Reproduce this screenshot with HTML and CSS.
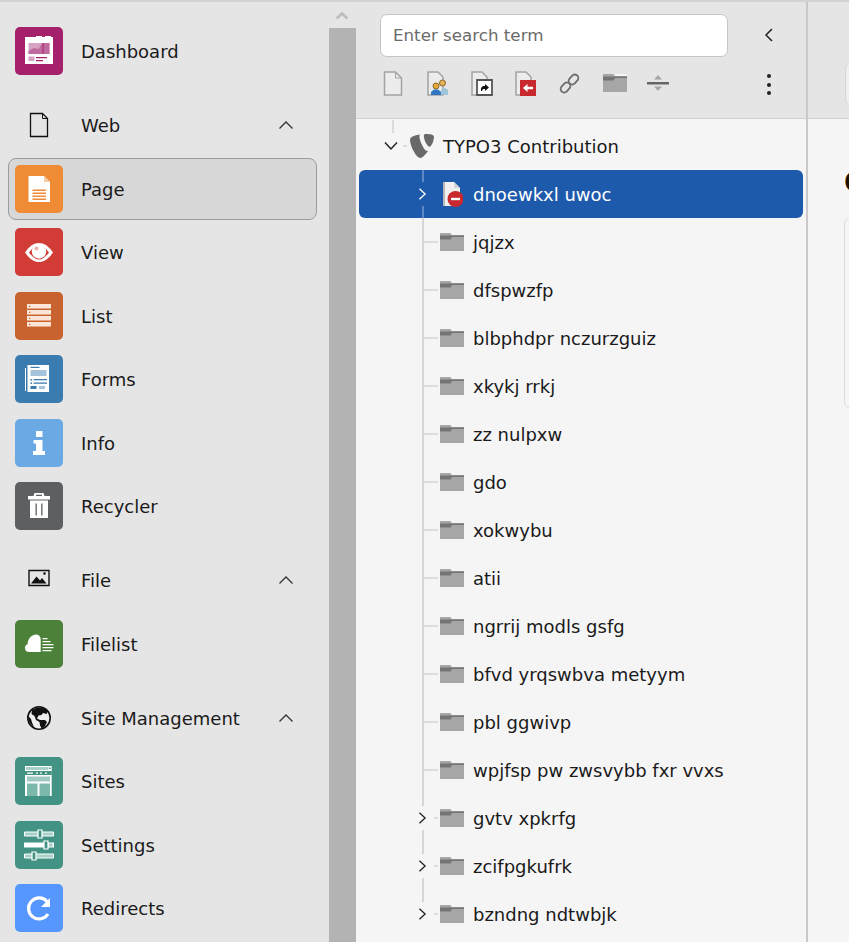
FILE: index.html
```html
<!DOCTYPE html>
<html lang="en">
<head>
  <meta charset="UTF-8">
  <title>TYPO3 Contribution - Page</title>
  <link rel="stylesheet" href="styles.css">
</head>
<body>
  <svg class="defs" width="0" height="0">
    <symbol id="folder" viewBox="0 0 24 18">
      <path fill="#a6a6a6" d="M0 2h24v16H0z"/>
      <path fill="#f5f5f5" d="M12 0h12v2H12z"/>
      <path fill="#a6a6a6" d="M0 0h10l2 2H0z"/>
      <path fill="#757575" d="M0 2.500h24V4H12l-1.500 2.500H0z"/>
    </symbol>
    <symbol id="chev-up" viewBox="0 0 16 10">
      <path fill="none" stroke="#333" stroke-width="1.300" d="M1.500 8.500 8 2l6.500 6.500"/>
    </symbol>
    <symbol id="chev-right" viewBox="0 0 10 16">
      <path fill="none" stroke="currentColor" stroke-width="1.500" d="M1.500 2 8 8l-6.500 6"/>
    </symbol>
  </svg>

  <div class="topline"></div>
  <div class="app">

    <nav class="modules">
      <div class="module-list">
        <a class="item first">
          <span class="tile dashboard">
            <svg viewBox="0 0 48 48"><path fill="#fff" d="M10 10h11V9h6v1h3V9h6v1h2v27H10z"/><path fill="#d7a3c3" d="M13.500 16h21v11h-21z"/><path fill="#c06b9f" d="M13.500 24l5-3 5 1 4-6h7v11h-21z"/><path fill="#a5216c" d="M27.500 16h1v11h-1z"/><path fill="#d7a3c3" d="M13.500 29.500h6V34h-6z"/><path fill="#a5216c" d="M21 30h11v1.200H21zM21 33h7v1.200h-7z"/></svg>
          </span>
          <span class="label">Dashboard</span>
        </a>

        <div class="group">
          <div class="item head">
            <span class="tile plain">
              <svg viewBox="0 0 48 48"><path fill="none" stroke="#111" stroke-width="1.300" d="M15.500 12.500h12l5 5v18h-17z"/><path fill="none" stroke="#111" d="M27.500 12.500v5h5"/></svg>
            </span>
            <span class="label">Web</span>
            <svg class="caret"><use href="#chev-up"/></svg>
          </div>
          <a class="item active">
            <span class="tile page">
              <svg viewBox="0 0 48 48"><path fill="#fff" d="M13.500 11H29l6 6v20H13.500z"/><path fill="#f7c9a4" d="M29 11l6 6h-6z"/><path fill="#ef8a35" d="M17.500 24.500H31V26H17.500zM17.500 27.500H31V29H17.500zM17.500 30.500H31V32H17.500zM17.500 33.500H31V35H17.500z"/></svg>
            </span>
            <span class="label">Page</span>
          </a>
          <a class="item">
            <span class="tile view">
              <svg viewBox="0 0 48 48"><path fill="#fff" d="M10 24.500C14.500 18 19 15 24 15s9.500 3 14 9.500C33.500 31 29 34 24 34s-9.500-3-14-9.500z"/><path fill="#d13c37" d="M14 24.500C17.500 20 20.500 18 24 18s6.500 2 10 6.500C30.500 29 27.500 31.500 24 31.500S17.500 29 14 24.500z"/><circle cx="24" cy="23.500" r="7.200" fill="#fff"/><circle cx="21.500" cy="20.500" r="2" fill="#d13c37" opacity=".4"/></svg>
            </span>
            <span class="label">View</span>
          </a>
          <a class="item">
            <span class="tile list">
              <svg viewBox="0 0 48 48"><path fill="#fbe5d6" d="M12 12h24v4.500H12zM12 18h24v4.500H12zM12 24h24v4.500H12zM12 30h24v4.500H12z"/><path fill="#c8632f" d="M14 13.800h1.200V15H14zM14 19.800h1.200V21H14zM14 25.800h1.200V27H14zM14 31.800h1.200V33H14z"/></svg>
            </span>
            <span class="label">List</span>
          </a>
          <a class="item">
            <span class="tile forms">
              <svg viewBox="0 0 48 48"><path fill="#fff" d="M10 13h1v23h-1zM12.500 10H34v27H12.500z"/><path fill="#3a7bb0" d="M15.500 11.800h9V13h-9z"/><path fill="#a5c4dc" d="M15.500 15h16v6h-16z"/><path fill="#3a7bb0" d="M15.500 24h1.500v1.500h-1.500zM18.500 24H32v1.200H18.500zM15.500 27.500h1.500V29h-1.500zM18.500 27.500H32v1.200H18.500zM15.500 31h6v3h-6z"/><path fill="#a5c4dc" d="M24 31h6v3h-6z"/></svg>
            </span>
            <span class="label">Forms</span>
          </a>
          <a class="item">
            <span class="tile info">
              <svg viewBox="0 0 48 48"><path fill="#fff" d="M21 12h6.500v6H21zM18.500 21h9v11H30v4H18v-4h3v-7.500h-2.500z"/></svg>
            </span>
            <span class="label">Info</span>
          </a>
          <a class="item">
            <span class="tile recycler">
              <svg viewBox="0 0 48 48"><path fill="#fff" d="M19.500 11h9l1 3H35v3.500H13V14h5.500zM15 18.500h18V36H15z"/><path fill="#5c6063" d="M21 14h6v-1.200h-6zM20.500 21.500h1.300v12h-1.300zM26.200 21.500h1.300v12h-1.300z"/></svg>
            </span>
            <span class="label">Recycler</span>
          </a>
        </div>

        <div class="group">
          <div class="item head">
            <span class="tile plain">
              <svg viewBox="0 0 48 48"><path fill="none" stroke="#111" stroke-width="1.400" d="M14 14.500h20v15H14z"/><path fill="#111" d="M16 27.500l5.500-7 3.500 4 2-2.500 4.500 5.500z"/><circle cx="29.500" cy="17.500" r="1.300" fill="#111"/></svg>
            </span>
            <span class="label">File</span>
            <svg class="caret"><use href="#chev-up"/></svg>
          </div>
          <a class="item">
            <span class="tile filelist">
              <svg viewBox="0 0 48 48"><path fill="#fff" d="M14 32a4 4 0 0 1-1.500-7.700C13 18 17 14.500 21 14.500c3 0 4.700 2 4.700 5V32z"/><path fill="#fff" d="M27.500 18h5v1.300h-5zM27.500 21h8v1.300h-8zM27.500 24h11v1.300h-11zM27.500 27h11v1.300h-11zM27.500 30h9v1.300h-9z"/></svg>
            </span>
            <span class="label">Filelist</span>
          </a>
        </div>

        <div class="group">
          <div class="item head">
            <span class="tile plain">
              <svg viewBox="0 0 48 48"><circle cx="24" cy="24" r="11.200" fill="#eee" stroke="#111" stroke-width="1.600"/><path fill="#111" d="M22 13.500c4-.5 8 .5 11 3.500l-1.500 3-3.500-1-1.500 2-3 .5-1.500 3 3 1.500h5l2 2-2 4-3 3-2-3.500-.5-3.500-3.500-2-1.500-4-3-2 .5-4z"/><path fill="#111" d="M13.200 22c-.5 4 1.500 8 5.800 11l-2-4.500-1-3.500z"/></svg>
            </span>
            <span class="label">Site Management</span>
            <svg class="caret"><use href="#chev-up"/></svg>
          </div>
          <a class="item">
            <span class="tile sites">
              <svg viewBox="0 0 48 48"><path fill="#fff" d="M10 9h26.700v30H10z"/><path fill="#a8d0c8" d="M11 10h22.500v3H11z"/><path fill="#429384" d="M34.200 10.500h1.500V12h-1.500zM10 14h26.700v4H10z"/><path fill="#fff" d="M12 15.500h6v1.200h-6zM21 15.500h2v1.200h-2zM25 15.500h2v1.200h-2zM30 15.500h2v1.200h-2z"/><path fill="#429384" d="M12 19.500h23v5H12z" opacity=".5"/><path fill="#7db8ad" d="M12 26.500h10.500V39H12zM24.500 26.500H35V39H24.500z"/></svg>
            </span>
            <span class="label">Sites</span>
          </a>
          <a class="item">
            <span class="tile settings">
              <svg viewBox="0 0 48 48"><g fill="#a8d0c8" stroke="#fff" stroke-width="1"><path d="M9.500 11h29v4h-29zM9.500 33h29v4h-29z"/></g><path fill="#fff" d="M9 21.500h30v5H9z"/><path fill="#429384" d="M34 22.500h3.500v3H34z" opacity=".5"/><g fill="#429384" stroke="#fff" stroke-width="1.200"><path d="M23 9h4v8h-4zM29 20h4v8h-4zM17 31h4v8h-4z"/></g></svg>
            </span>
            <span class="label">Settings</span>
          </a>
          <a class="item">
            <span class="tile redirects">
              <svg viewBox="0 0 48 48"><path fill="none" stroke="#fff" stroke-width="3.200" d="M33 30a10.500 10.500 0 1 1-1-12.500"/><path fill="#fff" d="M35 14v9h-9z"/></svg>
            </span>
            <span class="label">Redirects</span>
          </a>
        </div>
      </div>

      <div class="scrollbar">
        <div class="scroll-btn">
          <svg viewBox="0 0 16 10"><path fill="none" stroke="#bdbdbd" stroke-width="3" d="M2 9l6-6 6 6"/></svg>
        </div>
        <div class="scroll-thumb"></div>
      </div>
    </nav>

    <section class="tree-panel">
      <header class="tree-head">
        <div class="search-row">
          <input class="search" type="text" placeholder="Enter search term">
          <svg class="collapse" viewBox="0 0 10 16"><path fill="none" stroke="#222" stroke-width="1.500" d="M8 2 2 8l6 6"/></svg>
        </div>
        <div class="tools">
          <svg class="tool t-page" viewBox="0 0 20 25"><path fill="#ececec" stroke="#a3a3a3" stroke-width="1.500" d="M1.500 1h11l6 6v17h-17z"/><path fill="none" stroke="#a3a3a3" d="M12.500 1v6h6"/></svg>
          <svg class="tool t-users" viewBox="0 0 22 25"><path fill="#ececec" stroke="#a3a3a3" stroke-width="1.500" d="M1 1h10l5 5v18H1z"/><path fill="#9fc3d8" d="M14 24v-5l2-2h2l3 2v5z"/><circle cx="15.500" cy="12" r="3" fill="#e4b05a" stroke="#8a6a2a"/><circle cx="9" cy="15" r="3" fill="#e8a93c" stroke="#8a6a2a"/><path fill="#2f77c2" d="M4 24v-3l3-2.500h4l3 2.500v3z"/></svg>
          <svg class="tool t-shortcut" viewBox="0 0 22 25"><path fill="#ececec" stroke="#a3a3a3" stroke-width="1.500" d="M1 1h10l5 5v18H1z"/><path fill="#fff" stroke="#555" stroke-width="1.800" d="M6 9h15v15H6z"/><path fill="#111" d="M10 20v-3l2-2h2v-2l4 3.500-4 3.500v-2h-2l-1 2z"/></svg>
          <svg class="tool t-external" viewBox="0 0 22 25"><path fill="#ececec" stroke="#a3a3a3" stroke-width="1.500" d="M1 1h10l5 5v18H1z"/><path fill="#c8292e" d="M5 9h16v16H5z"/><path fill="#fff" d="M8 17l4.500-4v2.800H18v2.400h-5.500V21z"/></svg>
          <svg class="tool t-link" viewBox="0 0 21 21"><g fill="none" stroke="#6e6e6e" stroke-width="1.800"><rect x="11" y="1" width="7" height="11" rx="3.500" transform="rotate(42 14.500 6.500)"/><rect x="3" y="9" width="7" height="11" rx="3.500" transform="rotate(42 6.500 14.500)"/></g></svg>
          <svg class="tool t-folder"><use href="#folder"/></svg>
          <svg class="tool t-split" viewBox="0 0 22 20"><path fill="#a6a6a6" d="M11 2l4 4.500H7zM11 18l-4-4.500h8z"/><path fill="#666" d="M0 9h22v2.500H0z"/></svg>
          <span class="kebab"><i></i><i></i><i></i></span>
        </div>
      </header>

      <div class="tree">
        <div class="row root">
          <svg class="toggle down" viewBox="0 0 16 10"><path fill="none" stroke="#222" stroke-width="1.500" d="M2 1.500 8 8l6-6.500"/></svg>
          <svg class="logo" viewBox="0 0 24 24"><path fill="#696969" d="M18.080 16.800c-.36.110-.65.140-1.030.140-3.090 0-7.630-10.810-7.630-14.410 0-1.330.310-1.770.750-2.150C6.400.810 1.980 2.160.570 3.970c-.310.440-.5 1.150-.5 2.040C.070 11.660 6.100 24 10.360 24c1.970 0 5.300-3.240 7.720-7.200M16.090 0c3.940 0 7.880.640 7.880 2.860 0 4.500-2.860 9.950-4.310 9.950-2.590 0-5.810-7.200-5.810-10.800C13.850.380 14.460 0 16.090 0"/></svg>
          <span class="name">TYPO3 Contribution</span>
        </div>
        <div class="row selected">
          <svg class="toggle"><use href="#chev-right"/></svg>
          <svg class="node-icon page-off" viewBox="0 0 24 26"><path fill="#f1f1f1" d="M4 1h11l6 6v13H4z"/><path fill="#b9b9b9" d="M4 1h2v24H4z"/><path fill="#d4d4d4" d="M15 1l6 6h-6z"/><path fill="#f1f1f1" d="M6 7h8v18H6z"/><circle cx="16.500" cy="18" r="8" fill="#c8292e"/><path fill="#fff" d="M12 16.800h9v2.400h-9z"/></svg>
          <span class="name">dnoewkxl uwoc</span>
        </div>
        <div class="row leaf"><span class="toggle"></span><svg class="node-icon"><use href="#folder"/></svg><span class="name">jqjzx</span></div>
        <div class="row leaf"><span class="toggle"></span><svg class="node-icon"><use href="#folder"/></svg><span class="name">dfspwzfp</span></div>
        <div class="row leaf"><span class="toggle"></span><svg class="node-icon"><use href="#folder"/></svg><span class="name">blbphdpr nczurzguiz</span></div>
        <div class="row leaf"><span class="toggle"></span><svg class="node-icon"><use href="#folder"/></svg><span class="name">xkykj rrkj</span></div>
        <div class="row leaf"><span class="toggle"></span><svg class="node-icon"><use href="#folder"/></svg><span class="name">zz nulpxw</span></div>
        <div class="row leaf"><span class="toggle"></span><svg class="node-icon"><use href="#folder"/></svg><span class="name">gdo</span></div>
        <div class="row leaf"><span class="toggle"></span><svg class="node-icon"><use href="#folder"/></svg><span class="name">xokwybu</span></div>
        <div class="row leaf"><span class="toggle"></span><svg class="node-icon"><use href="#folder"/></svg><span class="name">atii</span></div>
        <div class="row leaf"><span class="toggle"></span><svg class="node-icon"><use href="#folder"/></svg><span class="name">ngrrij modls gsfg</span></div>
        <div class="row leaf"><span class="toggle"></span><svg class="node-icon"><use href="#folder"/></svg><span class="name">bfvd yrqswbva metyym</span></div>
        <div class="row leaf"><span class="toggle"></span><svg class="node-icon"><use href="#folder"/></svg><span class="name">pbl ggwivp</span></div>
        <div class="row leaf"><span class="toggle"></span><svg class="node-icon"><use href="#folder"/></svg><span class="name">wpjfsp pw zwsvybb fxr vvxs</span></div>
        <div class="row branch"><svg class="toggle"><use href="#chev-right"/></svg><svg class="node-icon"><use href="#folder"/></svg><span class="name">gvtv xpkrfg</span></div>
        <div class="row branch"><svg class="toggle"><use href="#chev-right"/></svg><svg class="node-icon"><use href="#folder"/></svg><span class="name">zcifpgkufrk</span></div>
        <div class="row branch"><svg class="toggle"><use href="#chev-right"/></svg><svg class="node-icon"><use href="#folder"/></svg><span class="name">bzndng ndtwbjk</span></div>
      </div>
    </section>

    <main class="content">
      <div class="content-head"><span class="head-btn"></span></div>
      <div class="content-body">
        <h1 class="title">C</h1>
        <div class="card"></div>
      </div>
    </main>

  </div>
</body>
</html>
```

FILE: styles.css
```css
* {
  box-sizing: border-box;
}

html, body {
  margin: 0;
  height: 942px;
  overflow: hidden;
}

body {
  font-family: 'DejaVu Sans', Verdana, sans-serif;
  font-size: 18px;
  color: #1a1a1a;
  background: #e5e5e5;
}

.defs {
  position: absolute;
}

.topline {
  height: 2px;
  background: #d2d2d2;
}

.app {
  display: flex;
  height: 940px;
}

/* module menu */
.modules {
  display: flex;
  width: 356px;
  flex: none;
  background: #e5e5e5;
}

.module-list {
  width: 329px;
  padding: 25.250px 0 0 8px;
}

.item {
  display: flex;
  align-items: center;
  width: 309px;
  height: 48px;
  margin-bottom: 15.500px;
  padding-left: 7px;
  position: relative;
}

.item.first {
  margin-bottom: 26px;
}

.group {
  margin-bottom: 26px;
}

.group .item:last-child {
  margin-bottom: 0;
}

.item.active::before {
  content: "";
  position: absolute;
  left: 0;
  top: -7px;
  right: 0;
  bottom: -7px;
  background: #d7d7d7;
  border: 1px solid #9c9c9c;
  border-radius: 8px;
}

.tile {
  width: 48px;
  height: 48px;
  flex: none;
  border-radius: 5px;
  position: relative;
}

.tile svg {
  display: block;
  width: 48px;
  height: 48px;
}

.label {
  margin: 0.600px 0 0 18px;
  position: relative;
  white-space: nowrap;
}

.caret {
  position: absolute;
  left: 270px;
  top: 19px;
  width: 16px;
  height: 10px;
}

.dashboard { background: #a5216c; }
.page { background: #ef8a35; }
.view { background: #d13c37; }
.list { background: #c8632f; }
.forms { background: #3a7bb0; }
.info { background: #6aa9e3; }
.recycler { background: #5c6063; }
.filelist { background: #4b8139; }
.sites, .settings { background: #429384; }
.redirects { background: #5597ff; }

.scrollbar {
  width: 27px;
  display: flex;
  flex-direction: column;
}

.scroll-btn {
  height: 26px;
  display: flex;
  align-items: center;
  justify-content: center;
  padding-right: 2px;
}

.scroll-btn svg {
  width: 14px;
  height: 10px;
}

.scroll-thumb {
  flex: 1;
  background: #b3b3b3;
}

/* page tree */
.tree-panel {
  width: 452px;
  flex: none;
  background: #f5f5f5;
  border-right: 2px solid #c9c9c9;
}

.tree-head {
  height: 117px;
  background: #e5e5e5;
  border-bottom: 1px solid #d0d0d0;
  padding: 12px 0 0 24px;
}

.search-row {
  display: flex;
  align-items: center;
}

.search {
  width: 348px;
  height: 43px;
  padding: 0 12px 2px;
  background: #fff;
  border: 1px solid #c6c6c6;
  border-radius: 7px;
  font-family: inherit;
  font-size: 16.700px;
}

.search::placeholder {
  color: #6b6b6b;
  opacity: 1;
}

.collapse {
  width: 10px;
  height: 16px;
  margin: 0 0 2px 36px;
}

.tools {
  position: relative;
  height: 28px;
  margin-top: 13px;
}

.tool {
  position: absolute;
  display: block;
}

.t-page { left: 3px; top: 1px; width: 20px; height: 25px; }
.t-users { left: 47px; top: 1px; width: 22px; height: 25px; }
.t-shortcut { left: 91px; top: 1px; width: 22px; height: 25px; }
.t-external { left: 135px; top: 1px; width: 22px; height: 25px; }
.t-link { left: 179px; top: 3px; width: 21px; height: 21px; }
.t-folder { left: 223px; top: 4px; width: 24px; height: 18px; }
.t-split { left: 267px; top: 3px; width: 22px; height: 20px; }

.kebab {
  position: absolute;
  left: 387px;
  top: 4px;
  display: flex;
  flex-direction: column;
  gap: 4.500px;
}

.kebab i {
  width: 4px;
  height: 4px;
  border-radius: 50%;
  background: #222;
}

.tree {
  padding: 3px 3px 0;
  position: relative;
}

.tree::before {
  content: "";
  position: absolute;
  left: 36px;
  top: 1px;
  width: 2px;
  height: 13px;
  background: #dcdcdc;
}

.row {
  display: flex;
  align-items: center;
  height: 48px;
  padding-left: 59px;
  position: relative;
}

.row .toggle {
  width: 9px;
  height: 14px;
  flex: none;
  margin-right: 13px;
  color: #222;
  position: relative;
  z-index: 1;
}

.row.leaf::before,
.row.branch::before,
.row.selected::before {
  content: "";
  position: absolute;
  left: 63px;
  top: 0;
  bottom: 0;
  width: 2px;
  background: #d6d6d6;
}

.row.branch::before {
  background: linear-gradient(#d6d6d6 12px, transparent 12px, transparent 36px, #d6d6d6 36px);
}

.row.branch:last-child::before {
  background: linear-gradient(#d6d6d6 12px, transparent 12px);
}

.row.leaf::after,
.row.branch::after {
  content: "";
  position: absolute;
  top: 23px;
  height: 2px;
  background: #dcdcdc;
}

.row.leaf::after {
  left: 65px;
  width: 14px;
}

.row.branch::after {
  left: 75px;
  width: 4px;
}

.row.root {
  padding-left: 24px;
}

.row.root .toggle.down {
  width: 16px;
  height: 10px;
  margin-right: 11px;
}

.row.root::after {
  content: "";
  position: absolute;
  left: 44px;
  top: 23px;
  width: 4px;
  height: 2px;
  background: #dcdcdc;
}

.logo {
  width: 24px;
  height: 24px;
  flex: none;
  margin-right: 9px;
}

.node-icon {
  width: 24px;
  height: 18px;
  flex: none;
  margin-right: 9px;
}

.page-off {
  height: 26px;
  margin-left: -1px;
  margin-right: 10px;
}

.row.selected {
  background: #1e5aab;
  color: #fff;
  border-radius: 6px;
}

.row.selected::before {
  background: linear-gradient(#5d8ac6 12px, transparent 12px, transparent 36px, #5d8ac6 36px);
}

.row.selected .toggle {
  color: #fff;
}

.name {
  white-space: nowrap;
  position: relative;
}

/* module content, cut off at the window edge */
.content {
  flex: 1;
  min-width: 0;
  overflow: hidden;
  background: #f5f5f5;
}

.content-head {
  height: 117px;
  background: #e5e5e5;
  border-bottom: 1px solid #d0d0d0;
  padding: 61px 0 0 37px;
}

.head-btn {
  display: block;
  width: 60px;
  height: 42px;
  background: #efefef;
  border: 1px solid #d6d6d6;
  border-radius: 6px;
}

.content-body {
  padding: 0 0 0 36px;
}

.title {
  margin: 46px 0 0;
  height: 53px;
  font-size: 28px;
  font-weight: 700;
  line-height: 36px;
  color: #1d1208;
}

.card {
  width: 80px;
  height: 190px;
  background: #f5f5f5;
  border: 1px solid #dcdcdc;
  border-radius: 6px;
}
```
